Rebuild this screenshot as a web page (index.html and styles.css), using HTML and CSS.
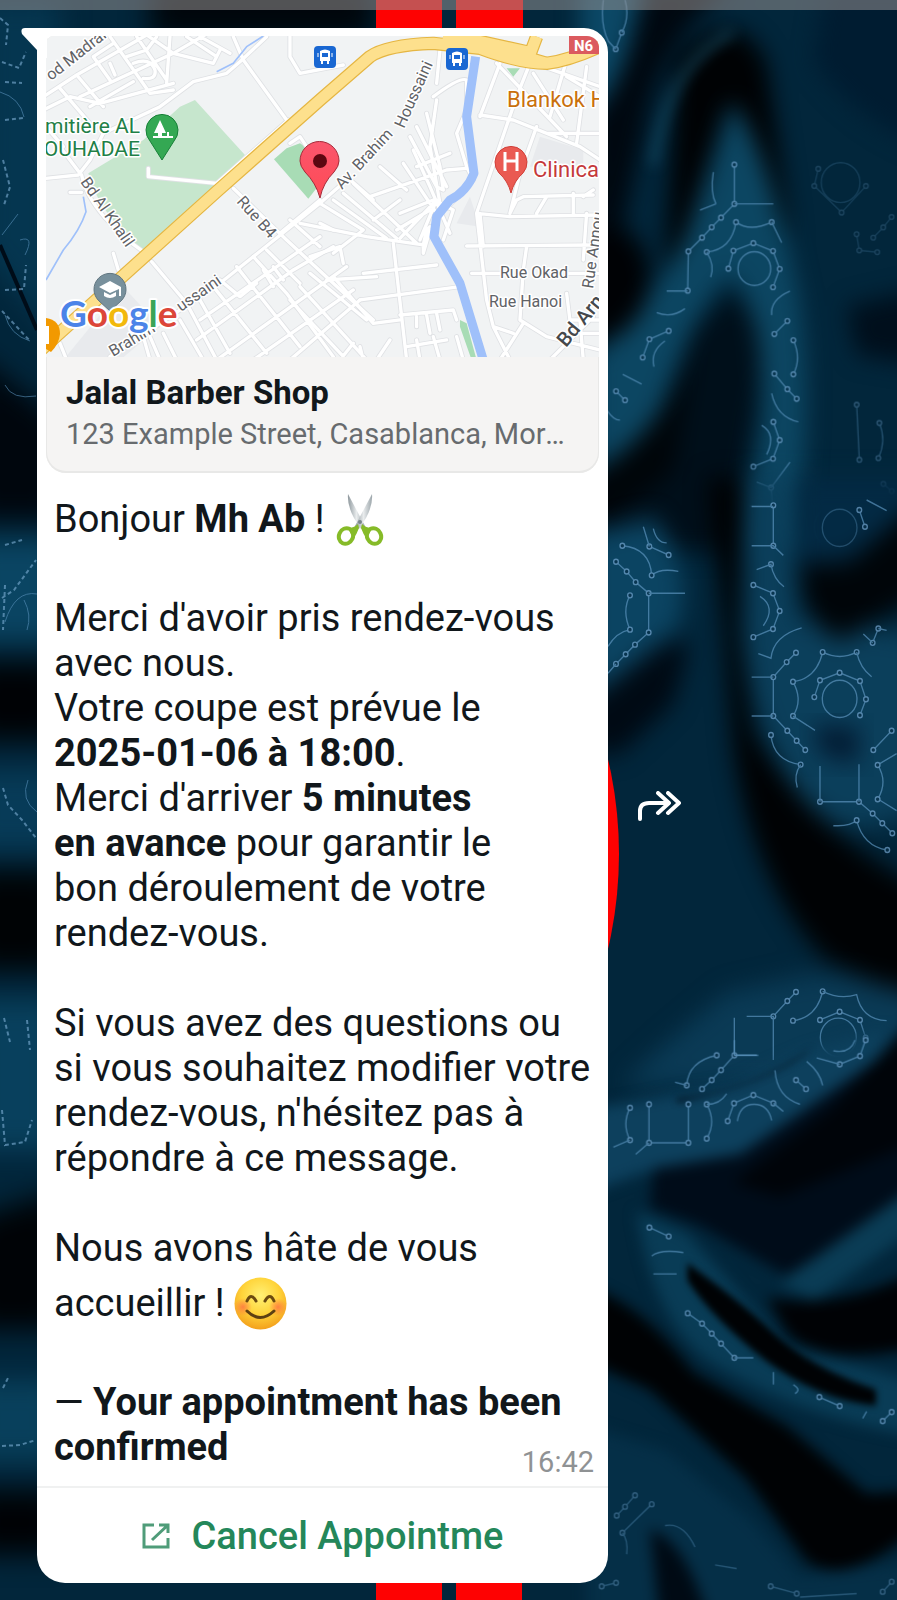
FILE: index.html
```html
<!DOCTYPE html>
<html lang="fr">
<head>
<meta charset="utf-8">
<meta name="viewport" content="width=device-width, initial-scale=1">
<title>Jalal Barber Shop</title>
<link rel="stylesheet" href="styles.css">
</head>
<body>
<svg class="wallpaper" viewBox="0 0 897 1600" preserveAspectRatio="xMidYMid slice" aria-hidden="true">
  <defs>
    <filter id="edge" x="-30%" y="-30%" width="160%" height="160%" color-interpolation-filters="sRGB"><feGaussianBlur stdDeviation="14"/></filter>
    <filter id="soft" x="-30%" y="-30%" width="160%" height="160%" color-interpolation-filters="sRGB"><feGaussianBlur stdDeviation="34"/></filter>
    <filter id="mid" x="-30%" y="-30%" width="160%" height="160%" color-interpolation-filters="sRGB"><feGaussianBlur stdDeviation="20"/></filter>
    <marker id="node" viewBox="-12 -12 24 24" markerWidth="24" markerHeight="24" markerUnits="userSpaceOnUse"><circle r="7" fill="#07304a" stroke="#74a5cf" stroke-width="4"/></marker>
  </defs>
  <rect width="897" height="1600" fill="#02263b"/>

  <!-- left edge folds -->
  <g filter="url(#edge)">
    <path d="M-20 0H60V340L-20 250Z" fill="#053650"/>
    <path d="M-30 350L60 420V520H-30Z" fill="#00060d"/>
    <path d="M-30 540H60V640H-30Z" fill="#0a4563"/>
    <path d="M-30 662H60V740H-30Z" fill="#000205"/>
    <path d="M-30 770H60V850H-30Z" fill="#073b58"/>
    <path d="M-30 870H60V970H-30Z" fill="#000305"/>
    <path d="M-30 1000H60V1150H-30Z" fill="#08405d"/>
    <path d="M-30 1220L60 1190V1330H-30Z" fill="#000306"/>
    <path d="M-30 1380H60V1460H-30Z" fill="#08405c"/>
    <path d="M-30 1490H60V1555H-30Z" fill="#000205"/>
    <path d="M150 -20H375V40H150Z" fill="#00060b"/>
  </g>
  <path d="M0 245L37 330" stroke="#000c18" stroke-width="4"/>
  <g class="circuit left">
    <path class="nodes small" d="M0 18L8 25L6 45"/><path class="nodes small" d="M2 62L19 68L26 52"/><path class="nodes small" d="M5 82L22 83"/>
    <path d="M0 92Q20 98 24 117"/><path class="nodes small" d="M5 120L23 118M3 160L10 187L4 205"/>
    <path d="M2 235L18 214M20 240Q35 235 25 255"/><path class="nodes small" d="M5 290L24 289L26 265M2 311L30 341"/>
    <path d="M5 315Q10 335 30 341M5 385Q12 400 36 396"/>
    <path class="nodes small" d="M5 545L22 540M5 585L3 630M2 598L14 590L36 560"/><path d="M37 594Q15 590 5 622M24 600Q32 615 27 630"/>
    <path class="nodes small" d="M3 788L8 805L22 820L36 838"/><path d="M28 780Q20 800 37 812"/>
    <path class="nodes small" d="M4 1018L10 1042M27 1020L30 1050"/><path class="nodes small" d="M2 1110L5 1145L25 1142L32 1120"/>
    <path class="nodes small" d="M3 1388L8 1378M2 1446L20 1445L36 1440"/>
  </g>

  <!-- upper right folds -->
  <g transform="translate(600) scale(.3333 .3444)">
    <g filter="url(#soft)">
      <path d="M-60 -60H130L60 260L-60 340Z" fill="#0b4866"/>
      <path d="M140 -60H420Q220 80 150 290L60 700L-30 1020V340Q80 240 140 -60Z" fill="#000810"/>
      <path d="M680 -60H960V420Q760 340 640 180Z" fill="#001c31"/>
      <path d="M230 180Q400 -10 500 180L575 700L380 300L240 740L190 850Q220 400 230 180Z" fill="#000204"/>
      <path d="M400 300Q500 420 595 850Q650 1200 580 1600H430L490 1200Q480 860 390 800Q280 880 150 1270L-20 1380V1040Q160 880 260 680Z" fill="#0c4662"/>
      <path d="M390 850Q510 920 470 1160L400 1600H0V1430Q220 1200 280 960Z" fill="#000f1a"/>
      <path d="M740 890L960 840V1060L770 1030Z" fill="#000f1c"/>
      <path d="M-60 680Q130 610 150 800Q140 980 -60 1010Z" fill="#000205"/>
      <path d="M290 960Q210 1250 -40 1380V1560L220 1370Z" fill="#000509"/>
    </g>
    <path d="M160 480Q200 190 400 92" fill="none" stroke="#1b5a75" stroke-width="24" opacity=".6" filter="url(#mid)"/>
    <g class="circuit">
      <path class="nodes" d="M403 478V592L363 632L335 660L306 690L265 730L263 844"/><path d="M200 845H263M403 592H520M300 610L348 592M170 908Q215 925 255 896"/>
      <path class="nodes" d="M320 732Q395 725 408 645Q450 675 515 645"/><path d="M515 645L545 705M320 732Q345 770 332 805M340 500Q330 560 348 592"/>
      <path class="nodes" d="M385 780L400 728L460 706L519 729L539 781L519 834"/><circle cx="463" cy="780" r="49"/>
      <path d="M570 845Q510 870 515 915"/><path class="nodes" d="M523 970L562 932M580 988Q605 1040 580 1087M523 1085L562 1130L590 1158"/>
      <path d="M515 1142Q530 1210 595 1225M485 1235Q530 1260 500 1320"/><path class="nodes" d="M520 1225L539 1278L519 1332L460 1355"/>
      <path class="nodes" d="M513 1416L518 1470"/><path d="M450 1470H518V1568M470 1400L513 1416L570 1342"/>
      <path class="nodes" d="M206 961L148 985L128 1038"/><path d="M195 990Q150 1020 162 1065M68 1087L125 1115M20 1190Q40 1220 60 1220"/>
      <path class="nodes" d="M48 1136L75 1162M65 95L47 143"/><path d="M10 0Q0 70 25 120L47 143M75 0Q90 50 65 95"/>
      <g opacity=".35"><path class="nodes" d="M655 490L643 540L725 617L798 540"/><circle cx="722" cy="530" r="58"/><path class="nodes" d="M770 680L778 727L832 732M820 690L850 660L875 630"/></g>
      <g opacity=".55"><path class="nodes" d="M770 1175L778 1335M838 1228Q860 1280 835 1330M875 1426L850 1405"/><path class="nodes" d="M780 1480L860 1482"/><circle cx="705" cy="1530" r="62"/></g>
    </g>
  </g>

  <!-- middle right folds -->
  <g transform="translate(600 500) scale(.3333 .3571)">
    <g filter="url(#soft)">
      <path d="M-40 100L160 50Q290 200 230 360L-40 570Z" fill="#0b4462"/>
      <path d="M440 -60H560L590 330L960 380V860Q700 1000 570 780Q430 560 440 300Z" fill="#0b3f5b"/>
      <path d="M590 -60H960V220L600 260Z" fill="#032a44"/>
      <path d="M600 180L750 170L960 0V270L730 390Q610 370 600 180Z" fill="#000509"/>
      <path d="M320 -60H430L415 370L460 650Q650 940 960 1080V1410L680 1290Q460 1080 400 700L365 300Z" fill="#000204"/>
      <path d="M-40 560L190 400L270 400L220 570L60 710H-40Z" fill="#000a14"/>
      <path d="M380 1380L620 1330Q740 1320 960 1390V1640H60L200 1520Z" fill="#0a3a55"/>
    </g>
    <path d="M640 630L780 640L770 740L660 710Z" fill="#031b32" filter="url(#soft)"/>
    <g class="circuit">
      <path class="nodes" d="M520 15V128M513 180M460 238L519 261L539 311L519 361L460 384"/><path d="M455 18H520M455 128H520L550 155M470 195L513 180Q520 220 552 243M480 270Q530 300 490 352"/>
      <path class="nodes" d="M588 428L560 454L520 496V605L562 646L590 674L616 700"/><path d="M455 496H520M455 605H520M605 358Q520 380 513 443L475 430"/>
      <path class="nodes" d="M513 658Q520 730 602 741"/><path d="M602 741Q580 770 592 805"/>
      <path class="nodes" d="M579 605Q610 560 579 509Q650 500 668 426Q720 450 770 426"/><path d="M770 426Q780 470 815 495M579 605L645 645"/>
      <path class="nodes" d="M643 552L660 505L719 484L780 507L798 558L780 603"/><circle cx="719" cy="557" r="52"/><circle cx="719" cy="78" r="52" opacity=".5"/>
      <path class="nodes" d="M875 646L820 700M835 360L818 400M778 28L795 75"/><path d="M835 360L860 365M790 375L818 400M800 0L860 30"/>
      <path class="nodes" d="M660 845H777L818 878L847 905L877 933"/><path d="M660 845V745M777 845V740M835 838L890 870M833 742L890 710M700 912Q750 915 770 897"/>
      <path class="nodes" d="M833 742Q865 790 833 838M770 897Q790 970 862 980"/>
      <path class="nodes" d="M48 173L80 200L107 230L146 261V371L105 405L77 432L48 459"/><path d="M48 459L24 485M146 261H255M24 410Q50 370 90 363M155 211Q180 190 235 200"/>
      <path class="nodes" d="M90 267Q65 310 90 363M67 128Q150 135 155 211M206 154L148 130"/><path d="M148 130L130 75M160 80Q170 120 200 120"/>
      <path class="nodes" d="M588 1378L562 1403L520 1446M579 1458Q650 1450 668 1376"/><path d="M440 1446H520V1568M403 1450V1555H470M668 1376Q720 1400 770 1385Q785 1455 860 1458"/>
      <path class="nodes" d="M660 1456L719 1433L780 1456L797 1506L780 1555"/><circle cx="715" cy="1505" r="54"/>
    </g>
  </g>

  <!-- lower right folds -->
  <g transform="translate(600 1040) scale(.3333 .3571)">
    <g filter="url(#mid)">
      <path d="M-40 195L400 120L620 30L860 -30L780 120L440 350L130 370L-40 430Z" fill="#0d405d"/>
      <path d="M160 360L420 320L840 50L960 -40V420L560 660L300 520L150 470Z" fill="#000c19"/>
      <path d="M400 400L700 190L960 -80V280L540 440Z" fill="#000409"/>
      <path d="M110 480L260 540L560 860L960 960V1110Q600 1060 330 900Q160 790 110 480Z" fill="#093c56"/>
      <path d="M540 680L960 400V520L640 730Z" fill="#0a3c55"/>
      <path d="M500 720Q720 760 960 640V860Q660 920 560 820Z" fill="#000205"/>
      <path d="M-40 690Q130 740 280 930L560 1080L800 1270L960 1260V1360Q740 1540 620 1460L440 1230L150 980L-40 900Z" fill="#000204"/>
      <path d="M-40 1080L200 1150L460 1350L600 1500L960 1460V1640H-40Z" fill="#052f47"/>
      <path d="M150 1370Q260 1400 330 1640H180Z" fill="#000a14"/>
    </g>
    <path d="M270 640Q420 740 520 830Q640 930 820 985V1015Q660 1000 500 890Q340 770 270 670Z" fill="#000204" stroke="#000204" stroke-width="16" filter="url(#fold)"/>
    <path d="M230 165Q460 140 640 20Q520 120 230 175Z" fill="#000b16" filter="url(#fold)"/>
    <filter id="fold" x="-10%" y="-20%" width="120%" height="140%" color-interpolation-filters="sRGB"><feGaussianBlur stdDeviation="10"/></filter>
    <g class="circuit">
      <path class="nodes" d="M403 43L363 84L335 112L306 137M350 43Q265 60 260 127M588 112L618 137"/><path d="M403 43V0M403 43H475M225 118L260 127M525 85Q530 160 600 180M620 60Q660 90 668 127"/>
      <path class="nodes" d="M147 180V288H265V180M320 180Q350 230 320 276M90 190Q65 235 90 280"/><path d="M90 280L40 300M147 288L107 320M320 180Q360 180 380 150"/>
      <path class="nodes" d="M383 227L402 177L460 154L520 177"/><path d="M412 227Q420 180 462 180Q505 180 515 225M520 177L550 200"/>
      <path class="nodes" d="M719 68L780 45L797 0"/><path d="M650 50L719 68M700 30Q750 40 765 0"/>
      <path class="nodes" d="M263 765L306 794L335 822L363 850L403 890"/><path d="M403 890H460M520 930V965M580 965Q605 980 585 990M788 1060L800 1040"/>
      <path class="nodes" d="M658 1000L719 1025M848 1067L875 1042M148 525L206 550"/><path d="M155 605Q180 585 250 595M160 655H230"/>
      <g opacity=".6"><path class="nodes" d="M50 1332L75 1307L105 1275M67 1380L155 1300"/><path d="M67 1380Q85 1400 80 1440M195 1360Q250 1350 285 1420M345 1470L410 1480M600 1560L770 1550"/><path class="nodes" d="M5 1530L48 1520M512 1530L590 1550M848 1545L875 1517"/></g>
    </g>
  </g>
  <path d="M376 0H442V40H376ZM456 0H523V40H456ZM376 1560H442V1600H376ZM456 1560H522V1600H456Z" fill="#fe0202"/>
  <circle cx="203" cy="854" r="416" fill="#fe0202" clip-path="inset(0 0 0 380px)"/>
</svg>

<div class="status-strip"></div>
<main class="chat">
  <article class="bubble">
    <svg class="tail" viewBox="0 0 26 30" aria-hidden="true"><path d="M4 0H26V30H16V22L1 6Q-1 0 4 0Z" fill="#fff"/></svg>
    <a class="place" href="#map">
      <svg class="map" viewBox="46 36 553 321" role="img" aria-label="Carte">
        <defs>
          <g id="roads">
            <path d="M130 290L230 225L440 105M130 330L210 290L300 310L520 250M240 290L520 160L640 90M270 320L400 245M180 265L270 370M230 225L310 320M330 240L280 170L340 130M345 225L330 190M330 110L450 280L520 270M410 110L500 240M510 110L500 250M380 170L440 150L470 110M400 190Q450 170 465 210Q470 240 430 235M440 105L520 160M520 160L640 190L660 150M560 110L650 170M600 110L690 160"/>
            <path d="M210 577H245M138 535L235 525L270 480L310 400L480 320L580 245L680 220L720 185L800 110M180 440L240 520M138 380L190 440M700 110L730 180L860 360M870 110V170L900 220L1030 195"/>
            <path d="M865 360L650 550L445 530V505M245 525C260 610 350 700 430 755M340 760L355 810M455 785L560 910L650 1080M700 565L860 720L1000 850L1120 960M330 1070L660 850L960 610L1040 540M870 430L900 410L920 440M180 1030L200 1080"/>
            <path d="M600 960L960 710M590 1020L880 810L1000 740M650 1080L1040 800M760 1080L1060 870M870 1080L1080 900M660 840L720 890L770 850M600 900L690 1060M640 860L800 1060M710 800L900 1040M760 770L860 880L1000 1070M800 750L900 850M870 660L960 740M820 800L850 840M790 810L820 860M960 670L1000 690M840 700L960 600M490 1000L530 1080M450 1010L480 1080M540 960L610 1080M430 1010L450 1080"/>
            <path d="M960 610L1090 690L1000 760M900 670L1100 710L1270 735M1000 600L1160 715M1030 580L1190 715M1060 550L1250 730M1040 530L1120 600M1110 590L1340 510L1400 505M1200 640L1300 600L1360 630L1330 720M1200 715L1310 600L1260 720M1120 660L1200 600M1220 570L1140 500M1290 630L1190 690M1250 500L1350 460M1210 490L1310 640M1240 450L1290 560L1350 700M1270 735L1280 690L1290 680M1270 735V760L1290 690"/>
            <path d="M1180 730L1220 1080M1230 410L1310 560L1330 570M1250 380L1340 560M1280 340L1320 500L1330 570M1310 300L1290 440L1320 610L1340 625L1420 540L1400 500L1370 400L1400 330L1400 240Q1380 230 1300 290M1320 150L1310 250"/>
            <path d="M930 770L1020 740L1030 790M980 840L1130 830M1000 830L1120 970L1200 960M1080 900L1380 860M1090 820L1310 795M1200 945L1360 930L1370 960M1250 950V980M1280 945L1290 1000M1310 940L1320 990M1220 1040L1340 1020M1250 1020L1260 1080M1300 1010L1320 1080M1370 1010L1390 1080M1020 1080L1060 1030M1130 1080L1170 1020M1090 1080L1080 1040M900 860L1100 1080M870 900L1040 1080M930 820L1100 960"/>
            <path d="M1500 190L1440 350M1440 345L1540 360L1740 440L1800 480M1490 190L1700 410M1590 190L1550 290L1430 640L1460 900L1480 980L1530 1080M1610 380L1560 520L1530 640M1430 640L1530 650L1800 645M1400 738L1780 735M1440 640L1450 740M1530 640L1550 600L1570 590L1780 585M1640 590L1610 640M1720 580V640M1750 590L1780 570M1580 740L1570 810L1560 960L1640 1010L1800 1050M1415 820H1500M1700 820H1800M1570 970L1500 1080M1700 880L1710 960L1800 960M1760 640L1750 780M1700 180L1650 350M1760 200L1730 430M1630 200L1800 260M1640 400H1800M1600 220L1690 360M1700 230L1800 290M1480 980L1540 1000M1650 1080L1780 950M1740 960L1750 1080M1750 1000H1800"/>
          </g>
          <path id="highway" d="M100 1070L650 575L960 300L1110 170Q1160 135 1300 130L1440 145Q1560 190 1640 190Q1720 180 1830 125M1330 110Q1470 140 1640 190M1610 110L1580 190M1330 105L1420 120L1580 155"/>
          <linearGradient id="pin-fill" x2="0" y2="1"><stop stop-color="#fa566d"/><stop offset="1" stop-color="#ff4a55"/></linearGradient>
        </defs>
        <rect x="46" y="36" width="553" height="321" fill="#f1f3f4"/>
        <g transform="scale(.3333)">
          <path d="M370 860L480 980L360 1080H190Z" fill="#e8eaed"/><path d="M1410 590L1440 680L1370 670Z M1620 410L1750 450V500H1590Z" fill="#e8eaed"/>
          <path d="M585 300L735 465L640 565L430 755Q290 630 265 520L430 420L540 320Z" fill="#c6e6cd"/>
          <path d="M822 478L860 445L900 430L1000 500L925 596Z" fill="#a8dcb5"/>
          <path d="M1520 205H1560L1540 230ZM1380 960L1400 970L1430 1080H1415L1380 980Z" fill="#a8dcb5"/>
          <use href="#roads" class="road-case"/><use href="#roads" class="road"/>
          <path d="M790 108L740 140L700 190L650 215M250 590L258 635Q240 690 190 750L138 840" class="stream"/>
          <path d="M1427 170L1400 350L1422 520Q1400 575 1350 600L1310 650L1302 710L1380 850L1450 1080" class="river"/>
          <use href="#highway" class="highway-case"/><use href="#highway" class="highway"/>
        </g>
        <path d="M569 36H599V54H569Z" fill="#db5a5f"/>
        <g class="map-label">
          <text x="574" y="51" class="shield">N6</text>
          <text transform="translate(51 81) rotate(-38)">od Madrai</text>
          <text transform="translate(80 182) rotate(55)">Bd Al Khalil</text>
          <text transform="translate(236 202) rotate(48)">Rue B4</text>
          <text transform="translate(342 190) rotate(-47)">Av. Brahim</text>
          <text transform="translate(404 129) rotate(-66)">Houssaini</text>
          <text transform="translate(113 357) rotate(-31)">Brahim</text>
          <text transform="translate(181 312) rotate(-35)">ussaini</text>
          <text x="500" y="278">Rue Okad</text><text x="489" y="307">Rue Hanoi</text>
          <text transform="translate(593 289) rotate(-82)">Rue Annou</text>
          <text transform="translate(566 348) rotate(-50)" class="avenue">Bd Arn</text>
          <text x="140" y="133" class="park" text-anchor="end">Cimitière AL</text>
          <text x="140" y="156" class="park" text-anchor="end">CHOUHADAE</text>
          <text x="507" y="107" class="hotel">Blankok H</text>
          <text x="533" y="177" class="clinic">Clinica</text>
        </g>
        <g transform="translate(162 128)"><path d="M0 32L-12 13A16 16 0 1 1 12 13Z" fill="#34a853" stroke="#188038"/><path d="M-2 -8L-8 5H-4V8H-9V10H11V8H7V4H5V8H0V5H4Z" fill="#fff"/></g>
        <g transform="translate(110 289)"><path d="M0 22L-11 12A16 16 0 1 1 11 12Z" fill="#78909c" stroke="#607580"/><path d="M-11 -2L0 -8L11 -2V7H9V0L0 4ZM-6 3L0 6L6 3V7Q0 11 -6 7Z" fill="#fff"/></g>
        <g transform="translate(511 161)"><path d="M0 32Q-3 20 -12 12A16 16 0 1 1 12 12Q3 20 0 32Z" fill="#ea5a52" stroke="#d0403a"/><path d="M-6 -9V10M6 -9V10M-6 0H6" stroke="#fff" stroke-width="3" fill="none"/></g>
        <g transform="translate(46 334)"><path d="M0 -16Q14 -14 14 0Q13 10 5 18L0 15Z" fill="#f29900"/><path d="M0 -8H3V10H0" fill="#fff"/></g>
        <g id="bus-a" transform="translate(314 46)"><rect width="22" height="22" rx="4" fill="#1967d2"/><path d="M6 5Q11 2 16 5V15H15V18H13V15H9V18H7V15H6ZM8 7V11H14V7Z" fill="#fff" fill-rule="evenodd"/><path d="M4 7V11M18 7V11" stroke="#fff"/></g>
        <use href="#bus-a" x="132" y="2"/>
        <path d="M320 198Q316 183 305 172Q300 166 300 161A19 19 0 1 1 339 161Q339 166 334 172Q323 183 320 198Z" fill="url(#pin-fill)" stroke="#a52b3a"/>
        <circle cx="320" cy="161" r="7" fill="#5c0710"/>
        <text x="60" y="327" class="google"><tspan fill="#4c84e8">G</tspan><tspan fill="#dc4639">o</tspan><tspan fill="#f2b90c">o</tspan><tspan fill="#4c84e8">g</tspan><tspan fill="#3aa457">l</tspan><tspan fill="#dc4639">e</tspan></text>
      </svg>
      <span class="place-info"><strong class="place-name">Jalal Barber Shop</strong><span class="place-address">123 Example Street, Casablanca, Morocco</span></span>
    </a>
    <div class="message">
      <p>Bonjour <b>Mh Ab</b> !
        <svg class="emoji" viewBox="0 0 53 53" role="img" aria-label="ciseaux">
          <defs><linearGradient id="blade"><stop stop-color="#8d979c"/><stop offset=".5" stop-color="#e9eced"/><stop offset="1" stop-color="#9ba5aa"/></linearGradient></defs>
          <path d="M14 1L31 33L27 36L20 25Q13 12 14 1Z" fill="url(#blade)"/><path d="M38 1L21 33L25 36L32 25Q39 12 38 1Z" fill="url(#blade)"/>
          <circle cx="26" cy="29" r="2" fill="#78858a"/>
          <g fill="none" stroke="#86bb28" stroke-width="4"><ellipse cx="12" cy="43" rx="7" ry="8" transform="rotate(25 12 43)"/><ellipse cx="40" cy="43" rx="7" ry="8" transform="rotate(-25 40 43)"/></g>
          <path d="M24 31L25 35Q23 41 19 46L14 35Q20 35 24 31ZM28 31L27 35Q29 41 33 46L38 35Q32 35 28 31Z" fill="#86bb28"/>
        </svg></p>
      <p>Merci d'avoir pris rendez-vous<br>avec nous.<br>Votre coupe est prévue le<br><b>2025-01-06 à 18:00</b>.<br>Merci d'arriver <b>5 minutes<br>en avance</b> pour garantir le<br>bon déroulement de votre<br>rendez-vous.</p>
      <p>Si vous avez des questions ou<br>si vous souhaitez modifier votre<br>rendez-vous, n'hésitez pas à<br>répondre à ce message.</p>
      <p>Nous avons hâte de vous<br>accueillir !
        <svg class="emoji" viewBox="0 0 53 53" role="img" aria-label="sourire">
          <defs><radialGradient id="face" cx=".5" cy=".35" r=".65"><stop stop-color="#fff176"/><stop offset=".55" stop-color="#ffd43a"/><stop offset="1" stop-color="#f3a01c"/></radialGradient><radialGradient id="cheek"><stop stop-color="#ff7043" stop-opacity=".8"/><stop offset="1" stop-color="#ff7043" stop-opacity="0"/></radialGradient></defs>
          <circle cx="26.500" cy="26.500" r="26" fill="url(#face)"/><circle cx="9" cy="30" r="9" fill="url(#cheek)"/><circle cx="44" cy="30" r="9" fill="url(#cheek)"/>
          <path d="M13 24Q17 15 22 24M31 24Q36 15 40 24" fill="none" stroke="#6b4a10" stroke-width="3" stroke-linecap="round"/><path d="M13 34Q26 47 40 34" fill="none" stroke="#5d4012" stroke-width="3" stroke-linecap="round"/>
        </svg></p>
      <div class="closing"><p>— <b>Your appointment has been<br>confirmed</b></p><time datetime="16:42">16:42</time></div>
    </div>
    <button class="action" type="button">
      <svg class="action-icon" viewBox="0 0 28 26" aria-hidden="true"><path d="M12 2H2V24H26V15M17 2H26V10M26 2L10 17" fill="none" stroke="#4f9c79" stroke-width="3"/></svg>
      Cancel Appointme
    </button>
  </article>
  <button class="forward" type="button" aria-label="Transférer">
    <svg viewBox="0 0 44 30" aria-hidden="true"><path d="M2 28V20Q2 12 11 12H30M20 2L31 12L20 22M30 2L41 12L30 22" fill="none" stroke="#fff" stroke-width="4" stroke-linecap="round" stroke-linejoin="round"/></svg>
  </button>
</main>
</body>
</html>
```
FILE: styles.css
```css
* { box-sizing: border-box; }
body { margin: 0; min-height: 100vh; background: #02263b; color: #11171b; font-family: Roboto, sans-serif; overflow-x: hidden; }
button { border: 0; padding: 0; background: none; font-family: inherit; cursor: pointer; }
p { margin: 0; }

.wallpaper { position: fixed; inset: 0; z-index: -1; width: 100%; height: 100%; }
.circuit { fill: none; stroke: #5b93bd; stroke-width: 4; opacity: .7; }
.circuit .nodes { marker: url(#node); }
.circuit.left { stroke-width: 1; opacity: .6; }
.circuit.left .nodes { marker: none; stroke: #7fb0d6; stroke-width: 2; stroke-dasharray: 4 3; }

.status-strip { height: 10px; background: rgba(150, 145, 145, .55); }
.chat { display: flex; align-items: center; gap: 30px; padding: 18px 24px 19px 37px; }
.bubble { position: relative; flex: 0 1 571px; min-width: 0; padding-top: 8px; background: #fff; border-radius: 0 24px 28px 28px; }
.tail { position: absolute; top: 0; left: -16px; width: 26px; height: 30px; }

.place { display: block; margin: 0 9px; overflow: hidden; border-radius: 8px 12px 20px 20px; background: #f5f4f3; box-shadow: inset 0 -1px 0 1px #e8e8e7; color: inherit; text-decoration: none; }
.map { display: block; width: 100%; height: auto; }
.place-info { display: flex; flex-direction: column; padding: 16px 20px 18px; }
.place-name { font-size: 33px; line-height: 40px; font-weight: 700; }
.place-address { overflow: hidden; color: #676b6e; font-size: 29px; line-height: 42px; white-space: nowrap; text-overflow: ellipsis; }

.road-case, .road { fill: none; stroke-linejoin: round; stroke-linecap: round; }
.road-case { stroke: #dfe1e4; stroke-width: 15; }
.road { stroke: #fff; stroke-width: 10; }
.stream, .river { fill: none; stroke: #9fc0fa; stroke-linejoin: round; }
.stream { stroke-width: 5; }
.river { stroke-width: 27; }
.highway-case, .highway { fill: none; stroke-linejoin: round; }
.highway-case { stroke: #e5b643; stroke-width: 40; }
.highway { stroke: #fde08d; stroke-width: 33; }
.map-label { fill: #5f6266; font-size: 16px; paint-order: stroke; stroke: #fff; stroke-width: 3px; stroke-linejoin: round; font-weight: 400; }
.map-label .shield { fill: #fff; stroke: none; font-size: 15px; font-weight: 700; }
.map-label .avenue { fill: #45484b; font-size: 20px; font-weight: 500; }
.map-label .park { fill: #1f8047; font-size: 21px; }
.map-label .hotel { fill: #c9700c; font-size: 22px; }
.map-label .clinic { fill: #c5393b; font-size: 22px; }
.google { font-family: Lato, sans-serif; font-size: 37px; font-weight: 700; paint-order: stroke; stroke: #fff; stroke-width: 4px; stroke-linejoin: round; }

.message { display: flex; flex-direction: column; gap: 45px; padding: 14px 14px 16px 17px; font-size: 38px; line-height: 45px; }
.emoji { width: 53px; height: 53px; margin: 6px 0 5px; vertical-align: -19px; }
.closing { display: grid; }
.closing > * { grid-area: 1 / 1; }
.closing time { place-self: end; margin-bottom: -8px; color: #8f9294; font-size: 29px; line-height: 32px; }

.action { display: flex; align-items: center; justify-content: center; gap: 22px; width: 100%; height: 97px; border-top: 2px solid #f0f1f1; color: #24875a; font-size: 38px; font-weight: 500; white-space: nowrap; }
.action-icon { flex: none; width: 28px; height: 26px; }
.forward { flex: none; width: 44px; height: 30px; }
.forward svg { display: block; width: 100%; height: 100%; }
```
